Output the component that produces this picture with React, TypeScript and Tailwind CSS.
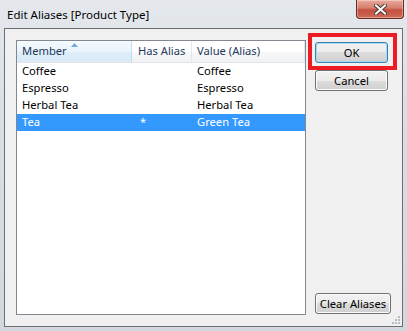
import React from 'react';

interface AliasRow {
  member: string;
  hasAlias: boolean;
  value: string;
}

const rows: AliasRow[] = [
  { member: 'Coffee', hasAlias: false, value: 'Coffee' },
  { member: 'Espresso', hasAlias: false, value: 'Espresso' },
  { member: 'Herbal Tea', hasAlias: false, value: 'Herbal Tea' },
  { member: 'Tea', hasAlias: true, value: 'Green Tea' },
];

const font = { fontFamily: '"Noto Sans", "Open Sans", sans-serif' };

// Win7 style push button
const Button: React.FC<{ label: string; focused?: boolean; className?: string }> = ({ label, focused, className }) => (
  <button
    className={`h-[21px] rounded-[3px] border text-[11.2px] leading-none text-black ${
      focused
        ? 'border-[#3c7fb1] shadow-[inset_0_0_0_1px_#9fdcf8] bg-[linear-gradient(#f2f2f2_0%,#ebebeb_50%,#dddddd_50%,#cfcfcf_100%)]'
        : 'border-[#707070] shadow-[inset_0_0_0_1px_#fcfcfc] bg-[linear-gradient(#f2f2f2_0%,#ebebeb_50%,#dddddd_50%,#cfcfcf_100%)]'
    } ${className ?? ''}`}
  >
    {label}
  </button>
);

export default function App() {
  return (
    <div
      className="relative flex h-[331px] w-[407px] flex-col overflow-hidden bg-[linear-gradient(180deg,#e4e8ed_0%,#d9dee4_40%,#d3d8de_100%)]"
      style={font}
    >
      {/* Title bar */}
      <div className="flex h-[28px] items-start justify-between">
        <span className="ml-[7px] mt-[6px] text-[11.5px] text-black">Edit Aliases [Product Type]</span>
        <div className="mr-[3px] flex h-[19px] w-[48px] items-center justify-center rounded-b-[4px] border border-t-0 border-[#6b2a22] bg-[linear-gradient(#e9a99b_0%,#d47e6e_45%,#c3503f_55%,#cf6c55_100%)] shadow-[inset_0_0_0_1px_rgba(255,255,255,0.35)]">
          <svg width="13" height="11" viewBox="0 0 13 11">
            <path d="M2 1.5 L11 9.5 M11 1.5 L2 9.5" stroke="#4a3b38" strokeWidth="4" strokeLinecap="square" />
            <path d="M2 1.5 L11 9.5 M11 1.5 L2 9.5" stroke="#ffffff" strokeWidth="2" strokeLinecap="square" />
          </svg>
        </div>
      </div>

      {/* Client area */}
      <div className="relative mx-[4px] mb-[4px] flex h-[299px] border border-[#6d7073] bg-[#f0f0f0] pl-[11px] pt-[11px]">
        {/* List view */}
        <div className="flex h-[275px] w-[290px] flex-col border border-[#828790] bg-white text-[11.2px] text-black">
          <div className="flex h-[22px] border-b border-[#e0e4e8]">
            <div className="relative flex w-[115px] items-center border-r border-[#c5dcef] bg-[linear-gradient(#f4fafd_0%,#e9f4fb_50%,#deeef9_51%,#d8eaf7_100%)] pl-[5px] text-[#1e395b]">
              Member
              <svg className="absolute left-[54px] top-[2px]" width="7" height="4" viewBox="0 0 7 4">
                <path d="M0 4 L3.5 0 L7 4 Z" fill="#7aa7cf" />
              </svg>
            </div>
            <div className="flex w-[60px] items-center border-r border-[#e3e8ee] bg-[linear-gradient(#ffffff_0%,#ffffff_50%,#f7f8fa_51%,#f1f2f4_100%)] pl-[6px] text-[#1e395b]">
              Has Alias
            </div>
            <div className="flex flex-1 items-center border-r border-[#e3e8ee] bg-[linear-gradient(#ffffff_0%,#ffffff_50%,#f7f8fa_51%,#f1f2f4_100%)] pl-[5px] text-[#1e395b]">
              Value (Alias)
            </div>
          </div>
          {rows.map((r) => (
            <div
              key={r.member}
              className={`flex h-[17px] items-center ${r.hasAlias ? 'bg-[#3399ff] text-white' : ''}`}
            >
              <span className="w-[115px] pl-[5px]">{r.member}</span>
              <span className="w-[60px] pl-[8px]">{r.hasAlias ? '*' : ''}</span>
              <span className="pl-[5px]">{r.value}</span>
            </div>
          ))}
        </div>

        {/* Buttons */}
        <div className="ml-[9px] flex h-[275px] flex-col">
          <Button label="OK" focused className="mt-[2px] w-[73px]" />
          <Button label="Cancel" className="mt-[7px] w-[73px]" />
          <Button label="Clear Aliases" className="mt-auto mb-[1px] w-[76px]" />
        </div>

        {/* Resize grip */}
        <svg className="absolute bottom-[1px] right-[1px]" width="10" height="10" viewBox="0 0 10 10">
          {[
            [7, 1],
            [4, 4],
            [7, 4],
            [1, 7],
            [4, 7],
            [7, 7],
          ].map(([x, y]) => (
            <rect key={`${x}-${y}`} x={x} y={y} width="2" height="2" fill="#b8bcc0" />
          ))}
        </svg>
      </div>

      {/* Red highlight around OK */}
      <div className="absolute left-[308px] top-[33px] h-[37px] w-[89px] border-[4px] border-[#ed1c24]" />
    </div>
  );
}
